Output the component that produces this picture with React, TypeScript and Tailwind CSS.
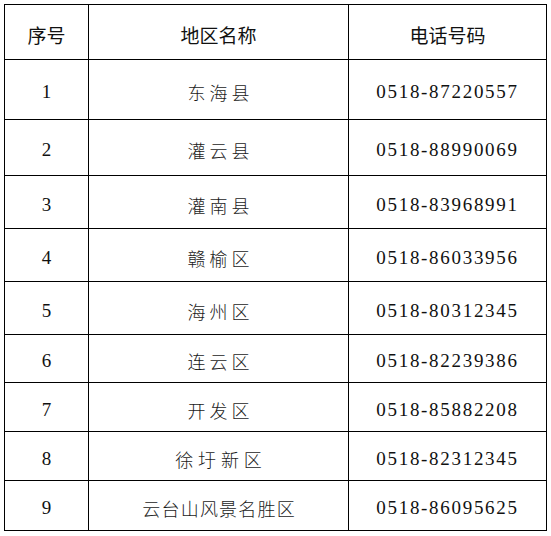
const rows = [
  { no: '1', name: '东海县', tel: '0518-87220557', h: 'h-[60px]', ls: 'tracking-[4px] mr-[-4px]' },
  { no: '2', name: '灌云县', tel: '0518-88990069', h: 'h-[56px]', ls: 'tracking-[4px] mr-[-4px]' },
  { no: '3', name: '灌南县', tel: '0518-83968991', h: 'h-[53px]', ls: 'tracking-[4px] mr-[-4px]' },
  { no: '4', name: '赣榆区', tel: '0518-86033956', h: 'h-[53px]', ls: 'tracking-[4px] mr-[-4px]' },
  { no: '5', name: '海州区', tel: '0518-80312345', h: 'h-[53px]', ls: 'tracking-[4px] mr-[-4px]' },
  { no: '6', name: '连云区', tel: '0518-82239386', h: 'h-[48px]', ls: 'tracking-[4px] mr-[-4px]' },
  { no: '7', name: '开发区', tel: '0518-85882208', h: 'h-[49px]', ls: 'tracking-[4px] mr-[-4px]' },
  { no: '8', name: '徐圩新区', tel: '0518-82312345', h: 'h-[49px]', ls: 'tracking-[4.8px] mr-[-4.8px]' },
  { no: '9', name: '云台山风景名胜区', tel: '0518-86095625', h: 'h-[50px]', ls: 'tracking-[1.2px] mr-[-1.2px]' },
];

const cell = 'border border-black text-center align-middle p-0 pt-[6px]';

export default function App() {
  return (
    <div className="min-h-[536px] w-[551px] bg-white pt-[4px] pl-[4px]">
      <table className="table-fixed border-collapse w-[542px] text-[#111]">
        <colgroup>
          <col className="w-[84px]" />
          <col className="w-[260px]" />
          <col className="w-[198px]" />
        </colgroup>
        <thead>
          <tr className="h-[55px] font-['Noto_Sans_CJK_SC',sans-serif] text-[19px]">
            <th className={`${cell} font-normal`}>序号</th>
            <th className={`${cell} font-normal`}>地区名称</th>
            <th className={`${cell} font-normal`}>电话号码</th>
          </tr>
        </thead>
        <tbody>
          {rows.map((r) => (
            <tr key={r.no} className={r.h}>
              <td className={`${cell} font-['Liberation_Serif',serif] text-[19px]`}>{r.no}</td>
              <td className={`${cell} font-['Noto_Sans_CJK_SC',sans-serif] font-light text-[18px] text-[#1a1a1a]`}>
                <span className={r.ls}>{r.name}</span>
              </td>
              <td className={`${cell} font-['Liberation_Serif',serif] text-[19px] tracking-[1.7px]`}>{r.tel}</td>
            </tr>
          ))}
        </tbody>
      </table>
    </div>
  );
}
